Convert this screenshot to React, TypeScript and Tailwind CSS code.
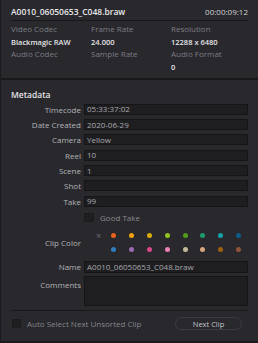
const fields: { label: string; value: string }[] = [
  { label: "Timecode", value: "05:33:37:02" },
  { label: "Date Created", value: "2020-06-29" },
  { label: "Camera", value: "Yellow" },
  { label: "Reel", value: "10" },
  { label: "Scene", value: "1" },
  { label: "Shot", value: "" },
  { label: "Take", value: "99" },
];

const rowOne = ["#e8611a", "#f0a00c", "#d8ae0a", "#90c41e", "#4f9d17", "#1c9b6c", "#13a2aa", "#0d5d8a"];
const rowTwo = ["#2f7dbd", "#9a6bb3", "#d94787", "#ea82b4", "#c6b89b", "#d6a47e", "#a1600f", "#8e553b"];

function Label({ children }: { children: React.ReactNode }) {
  return (
    <div className="w-[70px] shrink-0 text-right text-[8px] leading-[11px] text-[#b4b4b8]">
      {children}
    </div>
  );
}

function Dots({ colors, mark }: { colors: string[]; mark?: boolean }) {
  return (
    <div className="flex h-[10px] items-center">
      <div className="flex w-[27px] justify-center pl-[2px] text-[9px] leading-[10px] text-[#6e6e74]">
        {mark ? "×" : ""}
      </div>
      <div className="flex gap-[12.9px]">
        {colors.map((c) => (
          <span
            key={c}
            className="block h-[5px] w-[5px] rounded-full"
            style={{ backgroundColor: c }}
          />
        ))}
      </div>
    </div>
  );
}

export default function App() {
  return (
    <div
      className="flex h-[343px] w-[258px] flex-col overflow-hidden border-l border-b-[2px] border-[#1b1b1e] bg-[#28282d] text-[8px]"
      style={{ fontFamily: '"Open Sans", "Noto Sans", sans-serif' }}
    >
      {/* clip info */}
      <div className="px-[10px]">
        <div className="flex h-[20px] items-center justify-between pt-[4px]">
          <span className="text-[8.5px] font-semibold text-[#e8e8ea]">
            A0010_06050653_C048.braw
          </span>
          <span className="text-[8px] text-[#d2d2d6]">00:00:09:12</span>
        </div>
        <div className="h-px bg-[#18181b]" />
        <div className="grid grid-cols-[80px_80px_1fr] pt-[2px] leading-[12.7px]">
          <span className="text-[#7d7d84]">Video Codec</span>
          <span className="text-[#7d7d84]">Frame Rate</span>
          <span className="text-[#7d7d84]">Resolution</span>
          <span className="text-[7.5px] font-semibold text-[#e4e4e6]">Blackmagic RAW</span>
          <span className="text-[7.5px] font-semibold text-[#e4e4e6]">24.000</span>
          <span className="text-[7.5px] font-semibold text-[#e4e4e6]">12288 x 6480</span>
          <span className="text-[#7d7d84]">Audio Codec</span>
          <span className="text-[#7d7d84]">Sample Rate</span>
          <span className="text-[#7d7d84]">Audio Format</span>
          <span />
          <span />
          <span className="text-[7.5px] font-semibold text-[#e4e4e6]">0</span>
        </div>
      </div>

      <div className="mt-[4px] h-[2px] bg-[#18181b]" />

      {/* metadata */}
      <div className="flex flex-1 flex-col px-[10px]">
        <div className="pt-[9px] text-[8.5px] font-semibold leading-[12px] text-[#e4e4e6]">
          Metadata
        </div>
        <div className="mt-[3px] flex flex-col gap-[4.3px]">
          {fields.map((f) => (
            <div key={f.label} className="flex items-center gap-[3px]">
              <Label>{f.label}</Label>
              <div className="flex h-[11px] flex-1 items-center border border-[#151517] bg-[#1e1e21] px-[2px] text-[8px] text-[#a9a9ad]">
                {f.value}
              </div>
            </div>
          ))}
        </div>

        <div className="mt-[5px] flex items-center gap-[6px] pl-[73px]">
          <span className="block h-[9px] w-[10px] rounded-[1px] border border-[#1a1a1d] bg-[#1f1f22]" />
          <span className="text-[8px] text-[#8a8a90]">Good Take</span>
        </div>

        <div className="mt-[7px] flex items-center gap-[3px]">
          <Label>Clip Color</Label>
          <div className="flex flex-col gap-[4px]">
            <Dots colors={rowOne} mark />
            <Dots colors={rowTwo} />
          </div>
        </div>

        <div className="mt-[6px] flex items-center gap-[3px]">
          <Label>Name</Label>
          <div className="flex h-[12px] flex-1 items-center border border-[#151517] bg-[#1e1e21] px-[2px] text-[8px] text-[#a9a9ad]">
            A0010_06050653_C048.braw
          </div>
        </div>
        <div className="mt-[3px] flex items-start gap-[3px]">
          <div className="w-[70px] shrink-0 pt-[3px] text-right text-[8px] leading-[11px] text-[#b4b4b8]">
            Comments
          </div>
          <div className="h-[30px] flex-1 border border-[#151517] bg-[#1e1e21]" />
        </div>

        <div className="mt-[4px] h-px bg-[#18181b]" />

        <div className="flex flex-1 items-center justify-between pb-[4px]">
          <div className="flex items-center gap-[6px] pl-[1px]">
            <span className="block h-[9px] w-[9px] rounded-[1px] border border-[#1a1a1d] bg-[#1f1f22]" />
            <span className="text-[8px] text-[#85858b]">Auto Select Next Unsorted Clip</span>
          </div>
          <button className="mr-[6px] h-[13px] w-[67px] rounded-full border border-[#3c3c42] text-[7.5px] leading-[10px] text-[#c4c4c8]">
            Next Clip
          </button>
        </div>
      </div>
    </div>
  );
}
